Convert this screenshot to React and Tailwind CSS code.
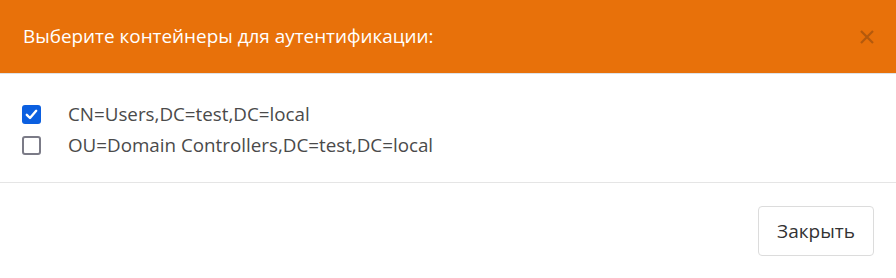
import React from "react";

export default function App() {
  return (
    <div className="w-[896px] h-[278px] bg-white flex flex-col overflow-hidden" style={{ fontFamily: '"Open Sans", sans-serif' }}>
      <div className="h-[74px] bg-[#e8710a] border-b border-[#dee2e6] flex items-center justify-between pl-[23px] pr-[22px] shrink-0">
        <h5 className="text-white text-[18.9px] leading-none">Выберите контейнеры для аутентификации:</h5>
        <button className="text-[#a8540d] opacity-80 w-[14px] h-[14px] flex items-center justify-center">
          <svg width="14" height="14" viewBox="0 0 14 14" fill="none" stroke="currentColor" strokeWidth="2.2">
            <path d="M1 1 L13 13 M13 1 L1 13" />
          </svg>
        </button>
      </div>
      <div className="h-[109px] border-b border-[#e5e5e5] pt-[31px] pl-[22px] flex flex-col gap-[12px] shrink-0">
        <label className="flex items-center gap-[27px] h-[19px]">
          <span className="w-[19px] h-[19px] rounded-[3px] bg-[#0b5fe0] flex items-center justify-center">
            <svg width="13" height="11" viewBox="0 0 13 11" fill="none" stroke="white" strokeWidth="2.4" strokeLinecap="round" strokeLinejoin="round">
              <path d="M1.8 5.8 L5 9 L11.2 1.8" />
            </svg>
          </span>
          <span className="text-[#4a4a4a] text-[18.8px] leading-none">CN=Users,DC=test,DC=local</span>
        </label>
        <label className="flex items-center gap-[27px] h-[19px]">
          <span className="w-[19px] h-[19px] rounded-[3px] border-[2.5px] border-[#7b7b87] bg-white"></span>
          <span className="text-[#4a4a4a] text-[18.8px] leading-none">OU=Domain Controllers,DC=test,DC=local</span>
        </label>
      </div>
      <div className="flex-1 flex items-start justify-end pt-[23px] pr-[22px]">
        <button className="w-[116px] h-[50px] border border-[#dcdcdc] rounded-[4px] bg-white text-[#333] text-[19px]">Закрыть</button>
      </div>
    </div>
  );
}
